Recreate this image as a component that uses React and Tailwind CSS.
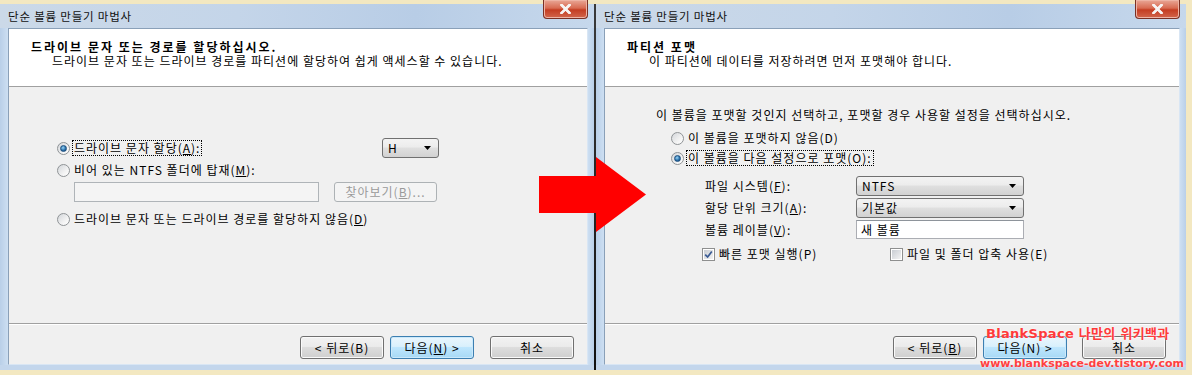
import React from "react";

function Radio({ checked }) {
  return (
    <span className="flex h-[13px] w-[13px] shrink-0 items-center justify-center rounded-full border border-[#8f9396] bg-[linear-gradient(135deg,#d3d6da,#f4f4f4_65%,#ffffff)]">
      {checked && (
        <span className="h-[7px] w-[7px] rounded-full border border-[#1c4f7f] bg-[radial-gradient(circle_at_40%_35%,#9ad6f7,#2c73ad_55%,#0d3a66)]" />
      )}
    </span>
  );
}

function Check({ checked }) {
  return (
    <span className="flex h-[13px] w-[13px] shrink-0 items-center justify-center border border-[#8e8f8f] bg-white">
      <span className="relative flex h-[9px] w-[9px] items-center justify-center bg-[linear-gradient(135deg,#c9cdd3,#f3f3f3)]">
        {checked && (
          <svg width="11" height="11" viewBox="0 0 11 11" className="absolute left-[-1px] top-[-1px]">
            <path d="M2.2 5.6 L4.6 8 L8.8 2.6" fill="none" stroke="#3a5b94" strokeWidth="1.7" />
          </svg>
        )}
      </span>
    </span>
  );
}

function Arrow() {
  return (
    <svg width="7" height="4" viewBox="0 0 7 4">
      <path d="M0 0H7L3.5 4Z" fill="#000" />
    </svg>
  );
}

function Select({ value, className }) {
  return (
    <div
      className={
        "flex h-[20px] items-center justify-between rounded-[3px] border border-[#707070] bg-[linear-gradient(#f3f3f3,#ececec_45%,#dfdfdf_50%,#d2d2d2)] pl-[5px] pr-[7px] " +
        className
      }
    >
      <span className="leading-[14px]">{value}</span>
      <Arrow />
    </div>
  );
}

function Btn({ children, def }) {
  return (
    <div
      className={
        def
          ? "flex h-[23px] w-[84px] items-center justify-center rounded-[3px] border border-[#3c7fb1] bg-[linear-gradient(#eaf6fd,#d9f0fc_45%,#bee6fd_50%,#a7d9f5)] shadow-[inset_0_0_0_1px_#cbe9fb]"
          : "flex h-[23px] w-[84px] items-center justify-center rounded-[3px] border border-[#707070] bg-[linear-gradient(#f2f2f2,#ebebeb_45%,#dddddd_50%,#cfcfcf)] shadow-[inset_0_0_0_1px_#fafafa]"
      }
    >
      <span className="leading-[14px]">{children}</span>
    </div>
  );
}

function CloseBtn() {
  return (
    <div className="absolute right-[6px] top-[-4px] flex h-[19px] w-[45px] items-center justify-center rounded-b-[4px] border border-t-0 border-[#7a3024] bg-[linear-gradient(#e9a797,#d86b52_45%,#c43d22_55%,#d2664c)] shadow-[inset_0_0_0_1px_#eeb3a4]">
      <svg width="11" height="10" viewBox="0 0 11 10">
        <path d="M1.5 1 L9.5 9 M9.5 1 L1.5 9" stroke="#ffffff" strokeWidth="2.6" strokeLinecap="square" />
        <path d="M1.5 1 L9.5 9 M9.5 1 L1.5 9" stroke="#f4f4f4" strokeWidth="1.6" strokeLinecap="square" />
      </svg>
    </div>
  );
}

function Window({ width, header, body, footer }) {
  return (
    <div className={"relative flex h-[366px] shrink-0 flex-col bg-[#c3d6ec] " + width}>
      <CloseBtn />
      <div className="flex h-[25px] items-center bg-[linear-gradient(90deg,#cbd9e8,#c4d5e9_40%,#b8cde6_70%,#c6d8ec)] pl-[8px]">
        <span className="text-[11.5px] leading-[14px] tracking-[0.8px] text-[#111]">단순 볼륨 만들기 마법사</span>
      </div>
      <div className="flex flex-1">
        <div className="w-[8px] bg-[linear-gradient(90deg,#b9cfe8,#cddff2)]" />
        <div className="flex flex-1 flex-col border border-[#8aa0b8] border-r-[#d9e6f4] border-b-[#d9e6f4]">
          <div className="h-[58px] border-b border-[#a0a0a0] bg-white">{header}</div>
          <div className="h-[236px] bg-[#f0f0f0]">{body}</div>
          <div className="flex h-[41px] justify-end gap-[6px] border-t border-[#a0a0a0] bg-[#f0f0f0] pr-[13px] pt-[12px] shadow-[inset_0_1px_0_#ffffff]">
            {footer}
          </div>
        </div>
        <div className="w-[6px] bg-[linear-gradient(90deg,#cddff2,#b9cfe8)]" />
      </div>
      <div className="h-[5px] bg-[#c3d6ec]" />
    </div>
  );
}

function Footer() {
  return (
    <>
      <Btn>&lt; 뒤로(B)</Btn>
      <Btn def>
        다음(<u>N</u>) &gt;
      </Btn>
      <div className="ml-[10px]">
        <Btn>취소</Btn>
      </div>
    </>
  );
}

function Footer2() {
  return (
    <>
      <Btn>
        &lt; 뒤로(<u>B</u>)
      </Btn>
      <Btn def>다음(N) &gt;</Btn>
      <div className="ml-[9px]">
        <Btn>취소</Btn>
      </div>
    </>
  );
}

export default function App() {
  return (
    <div className="relative h-[375px] w-[1192px] overflow-hidden bg-[#f3e8c1] font-['Noto_Sans_CJK_KR','Noto_Sans',sans-serif] text-[12px] tracking-[1px] text-black">
      <div className="flex pt-[4px]">
        <Window
          width="w-[594px]"
          header={
            <div className="flex flex-col pt-[11px] leading-[14px]">
              <span className="pl-[22px] font-bold tracking-[2px]">드라이브 문자 또는 경로를 할당하십시오.</span>
              <span className="pl-[43px]">드라이브 문자 또는 드라이브 경로를 파티션에 할당하여 쉽게 액세스할 수 있습니다.</span>
            </div>
          }
          body={
            <div className="flex flex-col pl-[48px] pt-[51px] leading-[14px]">
              <div className="flex h-[20px] items-center">
                <div className="flex w-[325px] items-center">
                  <Radio checked />
                  <span className="ml-[2px] border border-dotted border-black px-[1px]">
                    드라이브 문자 할당(<u>A</u>):
                  </span>
                </div>
                <Select value="H" className="w-[57px]" />
              </div>
              <div className="mt-[3px] flex h-[18px] items-center">
                <Radio />
                <span className="ml-[4px]">
                  비어 있는 NTFS 폴더에 탑재(<u>M</u>):
                </span>
              </div>
              <div className="mt-[3px] flex items-center pl-[17px]">
                <div className="h-[20px] w-[245px] border border-[#afb4b8] bg-[#f4f4f4]" />
                <div className="ml-[15px] flex h-[20px] w-[103px] items-center justify-center rounded-[3px] border border-[#adb2b5] bg-[#f4f4f4] text-[#9a9a9a]">
                  찾아보기(<u>B</u>)...
                </div>
              </div>
              <div className="mt-[8px] flex h-[18px] items-center">
                <Radio />
                <span className="ml-[4px]">
                  드라이브 문자 또는 드라이브 경로를 할당하지 않음(<u>D</u>)
                </span>
              </div>
            </div>
          }
          footer={<Footer />}
        />
        <div className="h-[366px] w-[2px] bg-[linear-gradient(#3a3a3a,#222_60%,#101010)]" />
        <Window
          width="w-[590px]"
          header={
            <div className="flex flex-col pt-[11px] leading-[14px]">
              <span className="pl-[22px] font-bold tracking-[2px]">파티션 포맷</span>
              <span className="pl-[44px]">이 파티션에 데이터를 저장하려면 먼저 포맷해야 합니다.</span>
            </div>
          }
          body={
            <div className="flex flex-col pt-[21px] leading-[14px]">
              <span className="pl-[51px]">이 볼륨을 포맷할 것인지 선택하고, 포맷할 경우 사용할 설정을 선택하십시오.</span>
              <div className="mt-[7px] flex h-[18px] items-center pl-[66px]">
                <Radio />
                <span className="ml-[4px]">이 볼륨을 포맷하지 않음(D)</span>
              </div>
              <div className="mt-[2px] flex h-[18px] items-center pl-[66px]">
                <Radio checked />
                <span className="ml-[2px] border border-dotted border-black px-[1px]">
                  이 볼륨을 다음 설정으로 포맷(O):
                </span>
              </div>
              <div className="mt-[9px] flex flex-col gap-[2px] pl-[100px]">
                <div className="flex h-[20px] items-center">
                  <span className="w-[151px]">
                    파일 시스템(<u>F</u>):
                  </span>
                  <Select value="NTFS" className="w-[168px]" />
                </div>
                <div className="flex h-[20px] items-center">
                  <span className="w-[151px]">
                    할당 단위 크기(<u>A</u>):
                  </span>
                  <Select value="기본값" className="w-[168px]" />
                </div>
                <div className="flex h-[19px] items-center">
                  <span className="w-[151px]">
                    볼륨 레이블(<u>V</u>):
                  </span>
                  <div className="flex h-[19px] w-[168px] items-center border border-[#abadb3] border-t-[#8e949b] bg-white pl-[4px]">
                    새 볼륨
                  </div>
                </div>
              </div>
              <div className="mt-[7px] flex h-[16px] items-center pl-[97px]">
                <div className="flex w-[188px] items-center">
                  <Check checked />
                  <span className="ml-[4px]">빠른 포맷 실행(P)</span>
                </div>
                <Check />
                <span className="ml-[4px]">파일 및 폴더 압축 사용(E)</span>
              </div>
            </div>
          }
          footer={<Footer2 />}
        />
      </div>

      <svg className="absolute left-[539px] top-[157px]" width="108" height="76" viewBox="0 0 108 76">
        <path d="M0 19H57V0L107 37.5L57 75V56H0Z" fill="#ff0000" />
      </svg>

      <div className="absolute left-[986px] top-[324px] font-['DejaVu_Sans','Noto_Sans_CJK_KR',sans-serif] text-[13px] font-bold tracking-[0.3px] text-[#ff3a3a] [text-shadow:0_0_2px_#fff]">
        BlankSpace 나만의 위키백과
      </div>
      <div className="absolute left-[980px] top-[356px] font-['DejaVu_Sans',sans-serif] text-[11px] font-bold tracking-normal text-[#ff4040] [text-shadow:0_0_2px_#fff]">
        www.blankspace-dev.tistory.com
      </div>
    </div>
  );
}
